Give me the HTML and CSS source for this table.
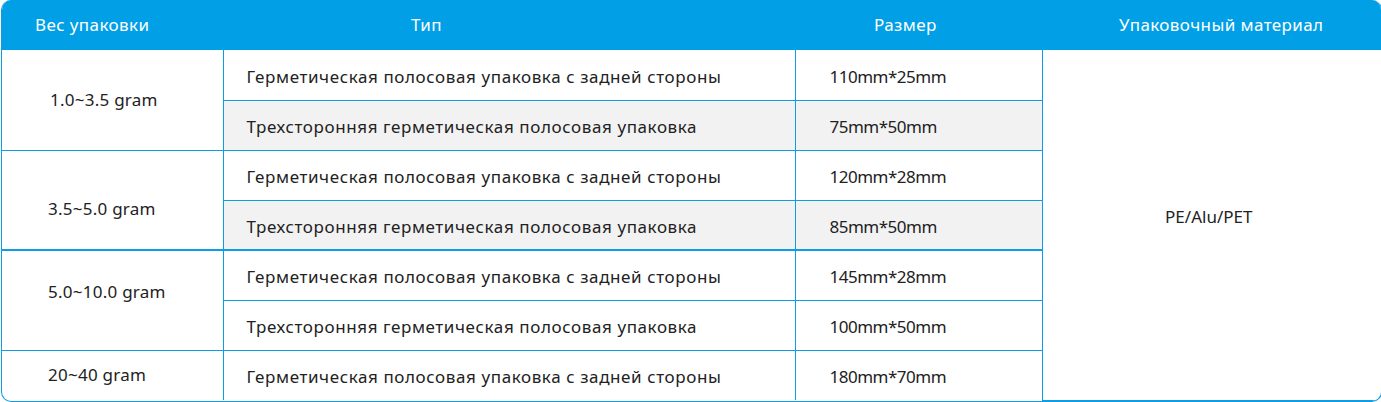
FILE: index.html
```html
<!DOCTYPE html>
<html lang="ru">
<head>
<meta charset="utf-8">
<link rel="stylesheet" href="styles.css">
</head>
<body>
<div class="tbl">
  <div class="thead">
    <div class="th th1">Вес упаковки</div>
    <div class="th th2">Тип</div>
    <div class="th th3">Размер</div>
    <div class="th th4">Упаковочный материал</div>
  </div>
  <table class="tbody">
    <colgroup>
      <col class="c1"><col class="c2"><col class="c3"><col class="c4">
    </colgroup>
    <tr>
      <td class="w" rowspan="2">1.0~3.5 gram</td>
      <td class="t">Герметическая полосовая упаковка с задней стороны</td>
      <td class="s">110mm*25mm</td>
      <td class="m" rowspan="7">PE/Alu/PET</td>
    </tr>
    <tr class="gray">
      <td class="t">Трехсторонняя герметическая полосовая упаковка</td>
      <td class="s">75mm*50mm</td>
    </tr>
    <tr>
      <td class="w w2" rowspan="2">3.5~5.0 gram</td>
      <td class="t">Герметическая полосовая упаковка с задней стороны</td>
      <td class="s">120mm*28mm</td>
    </tr>
    <tr class="gray thick">
      <td class="t">Трехсторонняя герметическая полосовая упаковка</td>
      <td class="s">85mm*50mm</td>
    </tr>
    <tr class="thick2">
      <td class="w w3" rowspan="2">5.0~10.0 gram</td>
      <td class="t">Герметическая полосовая упаковка с задней стороны</td>
      <td class="s">145mm*28mm</td>
    </tr>
    <tr>
      <td class="t">Трехсторонняя герметическая полосовая упаковка</td>
      <td class="s">100mm*50mm</td>
    </tr>
    <tr>
      <td class="w w4">20~40 gram</td>
      <td class="t">Герметическая полосовая упаковка с задней стороны</td>
      <td class="s">180mm*70mm</td>
    </tr>
  </table>
</div>
</body>
</html>
```
FILE: styles.css
```css
html, body {
  margin: 0;
  padding: 0;
  background: #fff;
}
body {
  font-family: "Noto Sans", "Open Sans", sans-serif;
  font-size: 17px;
  line-height: 20px;
  color: #222;
}
.tbl {
  width: 1379px;
  margin-left: 1px;
  border: 1px solid #0d9de4;
  border-top: none;
  border-radius: 10px;
  overflow: hidden;
}
.thead {
  display: flex;
  height: 50px;
  background: #009fe6;
  color: #fff;
  align-items: center;
  letter-spacing: 0.4px;
}
.th { white-space: nowrap; }
.th1 { width: 409px; padding-left: 33px; box-sizing: border-box; }
.th2 { width: 463px; }
.th3 { width: 244px; }
.th4 { flex: 1; padding-left: 1px; }
.tbody {
  width: 100%;
  border-collapse: collapse;
  table-layout: fixed;
}
.c1 { width: 221px; }
.c2 { width: 572px; }
.c3 { width: 247px; }
.tbody td {
  height: 50px;
  padding: 0;
  padding-top: 4px;
  box-sizing: border-box;
  border: 1px solid #0d9de4;
  vertical-align: middle;
  white-space: nowrap;
}
.tbody tr:first-child td { border-top: none; }
.tbody tr:last-child td { border-bottom: none; }
.tbody td.w {
  border-left: none;
  padding-left: 48px;
  padding-top: 0;
  letter-spacing: 0.25px;
}
.tbody td.w2 { padding-left: 46px; padding-top: 18px; }
.tbody td.w3 { padding-left: 46px; padding-top: 0; padding-bottom: 16px; }
.tbody td.w4 { padding-left: 46px; padding-top: 0; }
.tbody td.m {
  border-right: none;
  text-align: center;
  padding: 0 6px 16px 0;
}
.tbody td.t { padding-left: 23px; letter-spacing: 0.6px; }
.tbody td.s { padding-left: 34px; letter-spacing: -0.5px; }
.gray td.t, .gray td.s { background: #f2f2f2; }
.thick td.t, .thick td.s { border-bottom-width: 2px; }
.thick2 td { border-top-width: 2px; }
```
